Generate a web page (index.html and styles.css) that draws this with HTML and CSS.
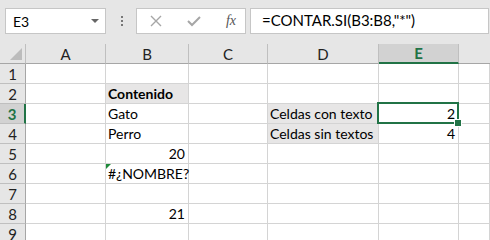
FILE: index.html
```html
<!DOCTYPE html>
<html lang="es">
<head>
    <meta charset="UTF-8">
    <title>Hoja</title>
    <link rel="stylesheet" href="styles.css">
</head>
<body>
    <div class="formula-bar">
        <div class="name-box">
            <span>E3</span>
            <span class="arrow"></span>
        </div>
        <div class="grip"><i></i><i></i><i></i></div>
        <div class="fx-box">
            <svg width="12" height="12" viewBox="0 0 12 12"><path d="M1 1L11 11M11 1L1 11" stroke="#a6a6a6" stroke-width="1.4" fill="none"/></svg>
            <svg width="14" height="12" viewBox="0 0 14 12"><path d="M1 6L5 10L13 2" stroke="#a6a6a6" stroke-width="2" fill="none"/></svg>
            <span class="fx">fx</span>
        </div>
        <div class="formula">=CONTAR.SI(B3:B8,"*")</div>
    </div>

    <div class="sheet">
        <div class="corner"><span class="tri"></span></div>
        <div class="col-head">A</div>
        <div class="col-head">B</div>
        <div class="col-head">C</div>
        <div class="col-head">D</div>
        <div class="col-head active">E</div>
        <div class="col-head last"></div>

        <div class="row-head">1</div>
        <div class="cell"></div><div class="cell"></div><div class="cell"></div><div class="cell"></div><div class="cell"></div><div class="cell"></div>

        <div class="row-head">2</div>
        <div class="cell"></div><div class="cell label bold">Contenido</div><div class="cell"></div><div class="cell"></div><div class="cell"></div><div class="cell"></div>

        <div class="row-head active">3</div>
        <div class="cell"></div><div class="cell">Gato</div><div class="cell"></div><div class="cell label">Celdas con texto</div><div class="cell num selected">2</div><div class="cell"></div>

        <div class="row-head">4</div>
        <div class="cell"></div><div class="cell">Perro</div><div class="cell"></div><div class="cell label">Celdas sin textos</div><div class="cell num">4</div><div class="cell"></div>

        <div class="row-head">5</div>
        <div class="cell"></div><div class="cell num">20</div><div class="cell"></div><div class="cell"></div><div class="cell"></div><div class="cell"></div>

        <div class="row-head">6</div>
        <div class="cell"></div><div class="cell flag">#¿NOMBRE?</div><div class="cell"></div><div class="cell"></div><div class="cell"></div><div class="cell"></div>

        <div class="row-head">7</div>
        <div class="cell"></div><div class="cell"></div><div class="cell"></div><div class="cell"></div><div class="cell"></div><div class="cell"></div>

        <div class="row-head">8</div>
        <div class="cell"></div><div class="cell num">21</div><div class="cell"></div><div class="cell"></div><div class="cell"></div><div class="cell"></div>

        <div class="row-head">9</div>
        <div class="cell"></div><div class="cell"></div><div class="cell"></div><div class="cell"></div><div class="cell"></div><div class="cell"></div>
    </div>
</body>
</html>
```

FILE: styles.css
```css
* {
    box-sizing: border-box;
}

body {
    margin: 0;
    width: 490px;
    height: 240px;
    overflow: hidden;
    background: #e6e6e6;
    font-family: Lato, "Liberation Sans", sans-serif;
    color: #000;
}

/* barra de fórmulas */
.formula-bar {
    display: flex;
    align-items: center;
    height: 44px;
    padding: 8px 1px 10px 5px;
}

.name-box {
    display: flex;
    align-items: center;
    justify-content: space-between;
    width: 101px;
    height: 26px;
    background: #fff;
    border: 1px solid #c6c6c6;
    padding: 0 6px 0 7px;
    font-size: 14px;
}

.arrow {
    border-left: 4px solid transparent;
    border-right: 4px solid transparent;
    border-top: 4px solid #666;
}

.grip {
    display: flex;
    flex-direction: column;
    gap: 2px;
    margin: 0 13px 0 15px;
}

.grip i {
    display: block;
    width: 2px;
    height: 2px;
    background: #777;
}

.fx-box {
    display: flex;
    align-items: center;
    justify-content: space-between;
    width: 110px;
    height: 26px;
    background: #fff;
    border: 1px solid #c6c6c6;
    padding: 0 9px 0 13px;
}

.fx {
    font-family: "Liberation Serif", serif;
    font-style: italic;
    font-size: 14px;
    color: #555;
}

.formula {
    flex: 1;
    height: 26px;
    margin-left: 4px;
    background: #fff;
    border: 1px solid #c6c6c6;
    padding: 2px 0 0 11px;
    font-size: 15px;
}

/* hoja */
.sheet {
    display: grid;
    grid-template-columns: 26px 80px 83px 79px 111px 80px 1fr;
    grid-auto-rows: 20px;
    background: #fff;
}

.corner,
.col-head {
    background: #e6e6e6;
    border-right: 1px solid #bfbfbf;
    border-bottom: 1px solid #a6a6a6;
    height: 20px;
}

.corner {
    position: relative;
}

.tri {
    position: absolute;
    right: 3px;
    bottom: 3px;
    border-left: 12px solid transparent;
    border-bottom: 12px solid #bcbcbc;
}

.col-head {
    display: flex;
    align-items: center;
    justify-content: center;
    font-size: 15px;
    color: #222;
}

.col-head.active {
    background: #d2d2d2;
    border-bottom: 2px solid #217346;
    color: #217346;
    font-weight: bold;
}

.col-head.last {
    border-right: none;
}

.row-head {
    display: flex;
    align-items: center;
    justify-content: center;
    background: #e6e6e6;
    border-right: 1px solid #a6a6a6;
    border-bottom: 1px solid #bfbfbf;
    font-size: 15px;
    color: #222;
}

.row-head.active {
    background: #d2d2d2;
    border-right: 2px solid #217346;
    color: #217346;
    font-weight: bold;
}

.cell {
    position: relative;
    border-right: 1px solid #d4d4d4;
    border-bottom: 1px solid #d4d4d4;
    padding: 0 3px 0 2px;
    font-size: 14px;
    line-height: 19px;
    white-space: nowrap;
}

.label {
    background: #e7e6e6;
}

.bold {
    font-weight: bold;
}

.num {
    text-align: right;
}

.selected::after {
    content: "";
    position: absolute;
    left: -2px;
    top: -2px;
    right: -1px;
    bottom: -1px;
    border: 2px solid #217346;
}

.selected::before {
    content: "";
    position: absolute;
    right: -4px;
    bottom: -4px;
    width: 6px;
    height: 6px;
    background: #217346;
    border: 1px solid #fff;
    z-index: 1;
}

.flag::before {
    content: "";
    position: absolute;
    left: 0;
    top: 0;
    border-top: 5px solid #1e8a3a;
    border-right: 5px solid transparent;
}
```
